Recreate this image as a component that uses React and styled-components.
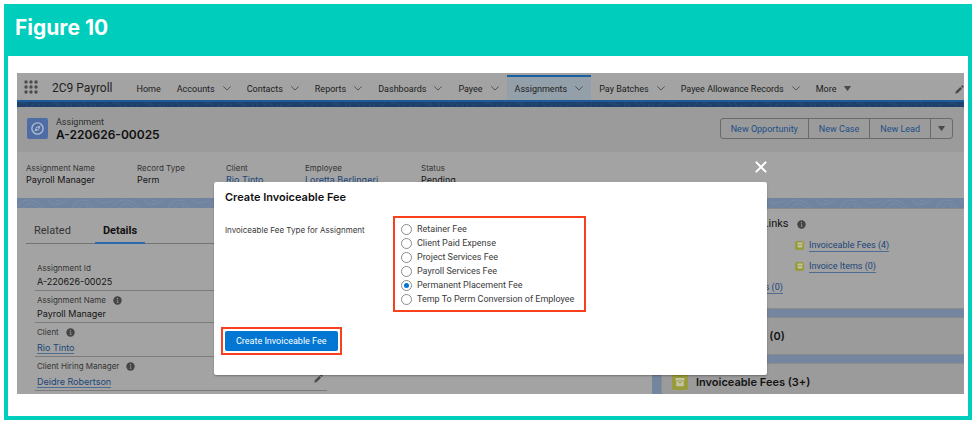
import React from "react";
import styled, { createGlobalStyle, css } from "styled-components";

const GlobalStyle = createGlobalStyle`
  *, *::before, *::after {
    box-sizing: border-box;
  }
  body {
    margin: 0;
    background: #fff;
    color: #161616;
    font-family: Roboto, "Liberation Sans", sans-serif;
    font-size: 9px;
    line-height: 12px;
  }
  h1, h2, h3, p, dl, dt, dd, ul, fieldset {
    margin: 0;
    padding: 0;
    border: 0;
    font-size: inherit;
    font-weight: inherit;
  }
  h1, h2, h3, dl {
    font-family: Inter, "Liberation Sans", sans-serif;
  }
  ul {
    list-style: none;
  }
  button {
    font: inherit;
    color: inherit;
    background: none;
    border: 0;
    padding: 0;
    cursor: pointer;
  }
  svg {
    display: block;
    flex: none;
  }
`;

const Figure = styled.section`
  display: flex;
  flex-direction: column;
  min-height: calc(100vh - 8px);
  margin: 4px;
  border: 4px solid #00cdbb;
  border-top: 0;
`;

const FigureTitle = styled.h1`
  background: #00cdbb;
  color: #fff;
  padding: 12px 7px 16px;
  font-size: 21px;
  font-weight: 700;
  line-height: 24px;
`;

const FigureBody = styled.div`
  padding: 17px 4px 22px 9px;
`;

const Screen = styled.div`
  position: relative;
  overflow: hidden;
  background: #74869f;
`;

const Nav = styled.nav`
  display: flex;
  align-items: stretch;
  height: 29px;
  padding-left: 7px;
  background: #a3a3a3;
  border-bottom: 2px solid #1d5b9b;
`;

const AppName = styled.span`
  align-self: center;
  margin: 2px 16px 0 14px;
  font-size: 12px;
  line-height: 16px;
  color: #222;
`;

const NavItem = styled.a`
  display: flex;
  align-items: center;
  gap: 8px;
  margin-top: 2px;
  padding: 0 8px;
  border-top: 2px solid transparent;
  color: #1c1c1c;
  text-decoration: none;
  white-space: nowrap;

  ${({ $active }) =>
    $active &&
    css`
      background: #94a0a9;
      border-top-color: #17609f;
    `}
`;

const NavEdit = styled.button`
  margin-left: auto;
  padding-top: 5px;
`;

const Band = styled.svg`
  width: 100%;
  height: ${({ $height }) => $height}px;
  background: ${({ $color }) => $color};
`;

const RecordHeader = styled.header`
  display: flex;
  align-items: center;
  gap: 8px;
  height: 45px;
  padding: 0 11px 2px 10px;
  background: #9b9b9b;
  border-radius: 2px 2px 0 0;
`;

const RecordIcon = styled.span`
  display: grid;
  place-items: center;
  width: 21px;
  height: 21px;
  border-radius: 2px;
  background: #4e6ca5;
`;

const RecordTitle = styled.div`
  flex: 1;

  p {
    line-height: 11px;
    color: #2c2c2c;
  }
  h2 {
    font-size: 12px;
    font-weight: 600;
    line-height: 13px;
    color: #111;
  }
`;

const ButtonGroup = styled.div`
  display: flex;
  border: 1px solid #6a6a6a;
  border-radius: 3px;
`;

const GroupButton = styled.button`
  display: flex;
  align-items: center;
  height: 19px;
  padding: 0 ${({ $narrow }) => ($narrow ? 7 : 10)}px;
  color: #1c4f87;

  & + & {
    border-left: 1px solid #6a6a6a;
  }
`;

const Highlights = styled.dl`
  display: grid;
  grid-template-columns: 111px 89px 79px 116px 1fr;
  height: 46px;
  padding: 10px 9px 0;
  background: #a3a3a3;
`;

const Label = styled.dt`
  display: flex;
  align-items: center;
  gap: 7px;
  font-size: 8px;
  color: #333;
`;

const Value = styled.dd`
  color: #141414;
`;

const Link = styled.a`
  color: #1b4679;
  text-decoration: none;
  border-bottom: 1px solid #4d6c92;
`;

const Columns = styled.div`
  display: grid;
  grid-template-columns: minmax(0, 635fr) minmax(0, 303fr);
  gap: 9px;
`;

const Details = styled.section`
  padding: 11px 9px 3px;
  background: #a3a3a3;
`;

const Tabs = styled.div`
  display: flex;
  border-bottom: 1px solid #737373;
`;

const Tab = styled.button`
  padding: 4px 8px;
  margin-right: 16px;
  font-size: 11px;
  line-height: 15px;
  color: #333;
  border-bottom: 2px solid transparent;
  margin-bottom: -1px;

  ${({ $active }) =>
    $active &&
    css`
      color: #111;
      font-weight: 700;
      border-bottom-color: #2b67ab;
    `}
`;

const Fields = styled.dl`
  max-width: 292px;
  margin: 15px 0 0 9px;
`;

const Field = styled.div`
  position: relative;
  padding: 3px 2px 2px;
  border-bottom: 1px solid #7c7c7c;

  dd {
    padding-top: ${({ $link }) => ($link ? 4 : 2)}px;
  }
`;

const FieldEdit = styled.button`
  position: absolute;
  right: 4px;
  bottom: 7px;
`;

const Sidebar = styled.aside`
  display: flex;
  flex-direction: column;
  gap: 8px;
`;

const Card = styled.section`
  padding: ${({ $plain }) => ($plain ? "10px" : "7px 10px 8px")};
  background: ${({ $plain }) => ($plain ? "#9b9b9b" : "#a3a3a3")};
  border: 1px solid #8b8b8b;
  border-right: 0;
  border-radius: 2px 0 0 2px;

  &:last-child {
    flex: 1;
    padding-bottom: 0;
    border-bottom: 0;
  }
`;

const CardTitle = styled.h3`
  display: flex;
  align-items: center;
  gap: 8px;
  font-size: 11px;
  font-weight: 600;
  line-height: 16px;
  color: #141414;

  ${({ $light }) =>
    $light &&
    css`
      font-family: Roboto, "Liberation Sans", sans-serif;
      font-weight: 400;
    `}
`;

const QuickLinks = styled.ul`
  display: grid;
  grid-template-columns: 113px 1fr;
  grid-auto-rows: 12px;
  gap: 9px 10px;
  padding: 7px 0;

  li {
    display: flex;
    align-items: center;
    gap: 5px;
    white-space: nowrap;
  }
`;

const Tile = styled.span`
  display: grid;
  place-items: center;
  flex: none;
  width: ${({ $size }) => $size}px;
  height: ${({ $size }) => $size}px;
  border-radius: 2px;
  background: #989b3c;
`;

const Overlay = styled.div`
  position: absolute;
  inset: 0;
  display: flex;
  flex-direction: column;
  align-items: center;
  padding-top: 88px;
`;

const Modal = styled.div`
  width: 58.4%;
`;

const CloseButton = styled.button`
  display: block;
  margin: 0 0 9px auto;
`;

const Dialog = styled.form`
  padding: 8px 7px 20px;
  background: #fff;
  border-radius: 2px;
  box-shadow: 0 1px 2px rgba(0, 0, 0, 0.3);

  h2 {
    padding-left: 4px;
    font-size: 11px;
    font-weight: 600;
    line-height: 14px;
    color: #111;
  }
`;

const FeeType = styled.fieldset`
  display: flex;
  margin: 12px 0 15px;
  padding-left: 4px;
`;

const Legend = styled.span`
  flex: 0 0 168px;
  padding-top: 8px;
  font-family: Inter, "Liberation Sans", sans-serif;
  font-size: 8px;
  color: #3a3a3a;
`;

const Marked = styled.div`
  border: 2px solid #f8401f;
  padding: ${({ $pad }) => $pad};
  width: fit-content;
`;

const Option = styled.label`
  display: flex;
  align-items: center;
  gap: 5px;
  height: 14px;
  color: #3a3a3a;
  white-space: nowrap;
`;

const Radio = styled.input`
  appearance: none;
  display: grid;
  place-items: center;
  width: 11px;
  height: 11px;
  margin: 0;
  border: 1px solid #8b8b8b;
  border-radius: 50%;

  &:checked::before {
    content: "";
    width: 5px;
    height: 5px;
    border-radius: 50%;
    background: #0672d3;
  }
`;

const Submit = styled.button`
  display: block;
  height: 20px;
  padding: 0 11px;
  border-radius: 2px;
  background: #0176d3;
  color: #fff;
`;

const Waffle = () => (
  <svg width="14" height="29" viewBox="0 0 14 29" fill="#4b4b4b">
    {[9, 14, 19].map((y) =>
      [2, 7, 12].map((x) => <circle key={`${x}-${y}`} cx={x} cy={y} r="1.7" />)
    )}
  </svg>
);

const Chevron = () => (
  <svg width="8" height="5" viewBox="0 0 8 5" fill="none" stroke="#525252">
    <path d="M.6.7 4 4.1 7.4.7" strokeLinecap="round" />
  </svg>
);

const Triangle = () => (
  <svg width="7" height="5" viewBox="0 0 7 5" fill="#4a4a4a">
    <path d="M.4 0h6.2q.5.2.2.6L4 4.6q-.5.5-1 0L.2.6Q-.1.2.4 0z" />
  </svg>
);

const Pencil = () => (
  <svg width="9" height="9" viewBox="0 0 9 9" fill="#4a4a4a">
    <path d="M.3 8.7.9 6.3 5.3 1.9l1.8 1.8L2.7 8.1zM5.9 1.3 6.8.4q.4-.4.8 0l1 1q.4.4 0 .8l-.9.9z" />
  </svg>
);

const Info = () => (
  <svg width="9" height="9" viewBox="0 0 9 9">
    <circle cx="4.5" cy="4.5" r="4.2" fill="#454545" />
    <circle cx="4.5" cy="2.7" r=".6" fill="#a3a3a3" />
    <path d="M3.8 4.1h.9v2.2M3.8 6.4h1.7" stroke="#a3a3a3" strokeWidth=".7" fill="none" />
  </svg>
);

const Compass = () => (
  <svg width="13" height="13" viewBox="0 0 13 13" fill="none" stroke="#b0bacd">
    <circle cx="6.5" cy="6.5" r="5.6" strokeWidth="1.4" />
    <path d="M9.6 3.4 7.9 7.9 3.4 9.6l1.7-4.5z" fill="#b0bacd" stroke="none" />
    <circle cx="6.5" cy="6.5" r="1.1" fill="#4e6ca5" stroke="none" />
  </svg>
);

const Box = ({ size }) => (
  <svg width={size} height={size} viewBox="0 0 10 10" fill="#c3c4a2">
    <rect x=".5" y="1" width="9" height="2.4" rx=".5" />
    <path d="M1.2 4.2h7.6v4.3q0 .7-.7.7H1.9q-.7 0-.7-.7zM3.6 5v.9h2.8V5z" fillRule="evenodd" />
  </svg>
);

const Cross = () => (
  <svg width="12" height="12" viewBox="0 0 12 12" stroke="#fff" strokeWidth="2">
    <path d="m1.4 1.4 9.2 9.2M10.6 1.4 1.4 10.6" strokeLinecap="round" />
  </svg>
);

const CircuitBand = () => (
  <Band $height={5} $color="#1d416b" aria-hidden="true">
    <defs>
      <pattern id="circuit" width="93" height="5" patternUnits="userSpaceOnUse">
        <path
          d="M2 1h6l3 4M14 5l3-4M20 5l3-4M26 5l3-4M34 1h8M38 3h6M50 0v5M54 1v4M60 0l4 5M66 0l4 5M74 2v3M78 1v4M84 4l5-3"
          stroke="#2c4d76"
          strokeWidth=".7"
          fill="none"
        />
      </pattern>
    </defs>
    <rect width="100%" height="100%" fill="url(#circuit)" />
  </Band>
);

const ContourBand = () => (
  <Band $height={10} $color="#71849f" aria-hidden="true">
    <defs>
      <pattern id="contour" width="96" height="10" patternUnits="userSpaceOnUse">
        <path
          d="M0 8q6-7 14-6t12 8M6 10q5-6 10-4t6 4M30 0q4 8 12 6t10-6M36 0q3 4 8 3M56 10q2-8 10-8t9 8M61 10q2-5 6-5t4 5M78 0q4 7 10 5t8-2"
          stroke="#7c8da6"
          strokeWidth=".7"
          fill="none"
        />
      </pattern>
    </defs>
    <rect width="100%" height="100%" fill="url(#contour)" />
  </Band>
);

const navItems = [
  { label: "Home", plain: true },
  { label: "Accounts" },
  { label: "Contacts" },
  { label: "Reports" },
  { label: "Dashboards" },
  { label: "Payee" },
  { label: "Assignments", active: true },
  { label: "Pay Batches" },
  { label: "Payee Allowance Records" },
  { label: "More", more: true },
];

const highlights = [
  ["Assignment Name", "Payroll Manager"],
  ["Record Type", "Perm"],
  ["Client", "Rio Tinto", true],
  ["Employee", "Loretta Berlingeri", true],
  ["Status", "Pending"],
];

const fields = [
  { label: "Assignment Id", value: "A-220626-00025" },
  { label: "Assignment Name", value: "Payroll Manager", info: true },
  { label: "Client", value: "Rio Tinto", info: true, link: true },
  { label: "Client Hiring Manager", value: "Deidre Robertson", info: true, link: true, edit: true },
];

const quickLinks = [
  "Timesheets (0)",
  "Invoiceable Fees (4)",
  "Placements (0)",
  "Invoice Items (0)",
  "Assignment Charges (0)",
];

const feeTypes = [
  "Retainer Fee",
  "Client Paid Expense",
  "Project Services Fee",
  "Payroll Services Fee",
  "Permanent Placement Fee",
  "Temp To Perm Conversion of Employee",
];

const App = () => {
  const [feeType, setFeeType] = React.useState("Permanent Placement Fee");

  return (
    <Figure>
      <GlobalStyle />
      <FigureTitle>Figure 10</FigureTitle>
      <FigureBody>
        <Screen>
          <Nav>
            <Waffle />
            <AppName>2C9 Payroll</AppName>
            {navItems.map(({ label, plain, active, more }) => (
              <NavItem key={label} href="#" $active={active}>
                {label}
                {more ? <Triangle /> : !plain && <Chevron />}
              </NavItem>
            ))}
            <NavEdit aria-label="Edit navigation">
              <Pencil />
            </NavEdit>
          </Nav>
          <CircuitBand />

          <RecordHeader>
            <RecordIcon>
              <Compass />
            </RecordIcon>
            <RecordTitle>
              <p>Assignment</p>
              <h2>A-220626-00025</h2>
            </RecordTitle>
            <ButtonGroup>
              <GroupButton>New Opportunity</GroupButton>
              <GroupButton>New Case</GroupButton>
              <GroupButton>New Lead</GroupButton>
              <GroupButton $narrow aria-label="More actions">
                <Triangle />
              </GroupButton>
            </ButtonGroup>
          </RecordHeader>
          <Highlights>
            {highlights.map(([label, value, link]) => (
              <div key={label}>
                <Label>{label}</Label>
                <Value>{link ? <Link href="#">{value}</Link> : value}</Value>
              </div>
            ))}
          </Highlights>
          <ContourBand />

          <Columns>
            <Details>
              <Tabs>
                <Tab>Related</Tab>
                <Tab $active>Details</Tab>
              </Tabs>
              <Fields>
                {fields.map(({ label, value, info, link, edit }) => (
                  <Field key={label} $link={link}>
                    <Label>
                      {label}
                      {info && <Info />}
                    </Label>
                    <Value>{link ? <Link href="#">{value}</Link> : value}</Value>
                    {edit && (
                      <FieldEdit aria-label={`Edit ${label}`}>
                        <Pencil />
                      </FieldEdit>
                    )}
                  </Field>
                ))}
              </Fields>
            </Details>
            <Sidebar>
              <Card>
                <CardTitle $light>
                  Related List Quick Links
                  <Info />
                </CardTitle>
                <QuickLinks>
                  {quickLinks.map((text) => (
                    <li key={text}>
                      <Tile $size={9}>
                        <Box size={6} />
                      </Tile>
                      <Link href="#">{text}</Link>
                    </li>
                  ))}
                </QuickLinks>
              </Card>
              <Card $plain>
                <CardTitle>
                  <Tile $size={16}>
                    <Box size={10} />
                  </Tile>
                  Invoice Items (0)
                </CardTitle>
              </Card>
              <Card $plain>
                <CardTitle>
                  <Tile $size={16}>
                    <Box size={10} />
                  </Tile>
                  Invoiceable Fees (3+)
                </CardTitle>
              </Card>
            </Sidebar>
          </Columns>

          <Overlay>
            <Modal role="dialog" aria-labelledby="fee-title">
              <CloseButton aria-label="Close">
                <Cross />
              </CloseButton>
              <Dialog onSubmit={(e) => e.preventDefault()}>
                <h2 id="fee-title">Create Invoiceable Fee</h2>
                <FeeType aria-labelledby="fee-legend">
                  <Legend id="fee-legend">Invoiceable Fee Type for Assignment</Legend>
                  <Marked $pad="4px 10px 4px 6px">
                    {feeTypes.map((type) => (
                      <Option key={type}>
                        <Radio
                          type="radio"
                          name="feeType"
                          checked={feeType === type}
                          onChange={() => setFeeType(type)}
                        />
                        {type}
                      </Option>
                    ))}
                  </Marked>
                </FeeType>
                <Marked $pad="2px">
                  <Submit>Create Invoiceable Fee</Submit>
                </Marked>
              </Dialog>
            </Modal>
          </Overlay>
        </Screen>
      </FigureBody>
    </Figure>
  );
};

export default App;
